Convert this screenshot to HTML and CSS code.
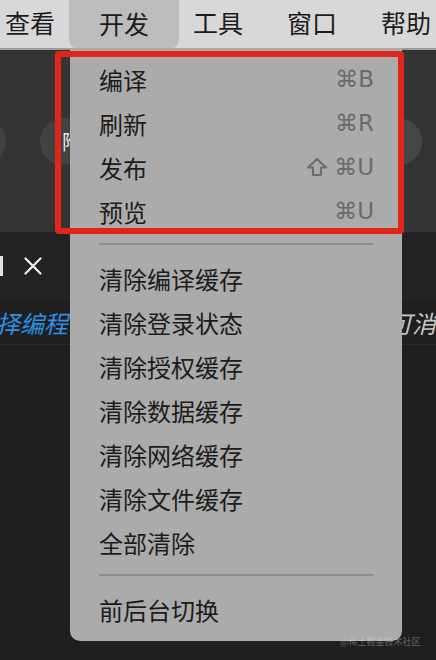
FILE: index.html
```html
<!DOCTYPE html>
<html lang="zh-cn">
<head>
    <meta charset="UTF-8">
    <title>开发菜单</title>
    <link rel="stylesheet" href="styles.css">
</head>
<body>
    <div class="menubar">
        <div class="bar-item">查看</div>
        <div class="bar-item active">开发</div>
        <div class="bar-item">工具</div>
        <div class="bar-item">窗口</div>
        <div class="bar-item">帮助</div>
    </div>

    <!-- app window behind the menu -->
    <div class="toolbar">
        <div class="round-btn"></div>
        <div class="round-btn"><span class="btn-label">附近</span></div>
        <div class="round-btn right"></div>
    </div>
    <div class="tabbar">
        <span class="tab-edge"></span>
        <svg class="tab-close" width="18" height="18" viewBox="0 0 18 18">
            <path d="M1.5 1.5 L16.5 16.5 M16.5 1.5 L1.5 16.5" stroke="#f2f2f2" stroke-width="2.2" stroke-linecap="round"/>
        </svg>
    </div>
    <div class="hint">
        <span class="hint-blue">择编程</span>
        <span class="hint-grey">可消</span>
    </div>
    <div class="editor"></div>

    <!-- dropdown -->
    <div class="dropdown">
        <div class="menu-item"><span>编译</span><span class="key">⌘B</span></div>
        <div class="menu-item"><span>刷新</span><span class="key">⌘R</span></div>
        <div class="menu-item">
            <span>发布</span>
            <span class="key">
                <svg class="shift" width="22" height="20" viewBox="0 0 22 20">
                    <path d="M11 2 L20 10.5 H15 V18 H7 V10.5 H2 Z" fill="none" stroke="#6d6d6d" stroke-width="2.2" stroke-linejoin="round"/>
                </svg>⌘U
            </span>
        </div>
        <div class="menu-item"><span>预览</span><span class="key">⌘U</span></div>
        <div class="separator"></div>
        <div class="menu-item">清除编译缓存</div>
        <div class="menu-item">清除登录状态</div>
        <div class="menu-item">清除授权缓存</div>
        <div class="menu-item">清除数据缓存</div>
        <div class="menu-item">清除网络缓存</div>
        <div class="menu-item">清除文件缓存</div>
        <div class="menu-item">全部清除</div>
        <div class="separator"></div>
        <div class="menu-item">前后台切换</div>
    </div>

    <div class="mark-box"></div>
    <div class="watermark">@稀土掘金技术社区</div>
</body>
</html>
```

FILE: styles.css
```css
:root {
    --bar-bg: #d8d8d8;
    --menu-bg: #ababab;
    --menu-text: #1c1c1c;
    --key-color: #6a6a6a;
    --mark-red: #e0251b;
}

body {
    margin: 0;
    width: 436px;
    height: 660px;
    overflow: hidden;
    position: relative;
    background: #1f1f1f;
    font-family: 'Noto Sans CJK SC', 'Noto Sans', sans-serif;
}

.menubar {
    display: flex;
    height: 48px;
    margin-left: -17px;
    background: var(--bar-bg);
    border-bottom: 2px solid #9c9c9c;
}

.bar-item {
    display: flex;
    align-items: center;
    padding: 0 22px 4px;
    font-size: 25px;
    color: var(--menu-text);
    white-space: nowrap;
}

.bar-item.active {
    padding: 0 30px 4px;
    margin: 0 -8px -3px;
    background: #bdbdbd;
    border-radius: 0 0 9px 9px;
    height: 45px;
}

.toolbar {
    display: flex;
    align-items: center;
    gap: 34px;
    height: 182px;
    margin-left: -41px;
    background: #343434;
}

.round-btn {
    width: 47px;
    height: 47px;
    border-radius: 50%;
    background: #424242;
    position: relative;
}

.round-btn.right {
    margin-left: auto;
    margin-right: 14px;
    background: #464646;
}

.btn-label {
    position: absolute;
    left: 22px;
    top: 9px;
    font-size: 20px;
    color: #e8e8e8;
    white-space: nowrap;
}

.tabbar {
    display: flex;
    align-items: center;
    gap: 21px;
    height: 68px;
    background: #232323;
}

.tab-edge {
    width: 3px;
    height: 20px;
    background: #e0e0e0;
}

.hint {
    display: flex;
    justify-content: space-between;
    align-items: center;
    height: 44px;
    margin-left: -4px;
    border-bottom: 1px solid #2c2c2c;
    font-size: 24px;
    font-style: italic;
    white-space: nowrap;
    overflow: hidden;
}

.hint-blue {
    color: #2d8fe6;
}

.hint-grey {
    color: #c6c6c6;
}

.dropdown {
    position: absolute;
    left: 70px;
    top: 48px;
    width: 332px;
    height: 593px;
    box-sizing: border-box;
    padding: 9px 28px 0 29px;
    background: var(--menu-bg);
    border-radius: 0 0 10px 10px;
}

.menu-item {
    display: flex;
    justify-content: space-between;
    align-items: center;
    height: 44px;
    font-size: 24px;
    color: var(--menu-text);
}

.key {
    display: flex;
    align-items: center;
    gap: 4px;
    font-family: 'DejaVu Sans', sans-serif;
    font-size: 23px;
    color: var(--key-color);
}

.shift {
    margin-right: 2px;
}

.separator {
    height: 2px;
    margin: 10px 0 11px;
    background: #8e8e8e;
}

.mark-box {
    position: absolute;
    left: 55px;
    top: 51px;
    width: 349px;
    height: 183px;
    box-sizing: border-box;
    border: 6px solid var(--mark-red);
    border-radius: 4px;
}

.watermark {
    position: absolute;
    left: 340px;
    top: 636px;
    font-size: 9px;
    line-height: 12px;
    color: rgba(255, 255, 255, 0.3);
}
```
